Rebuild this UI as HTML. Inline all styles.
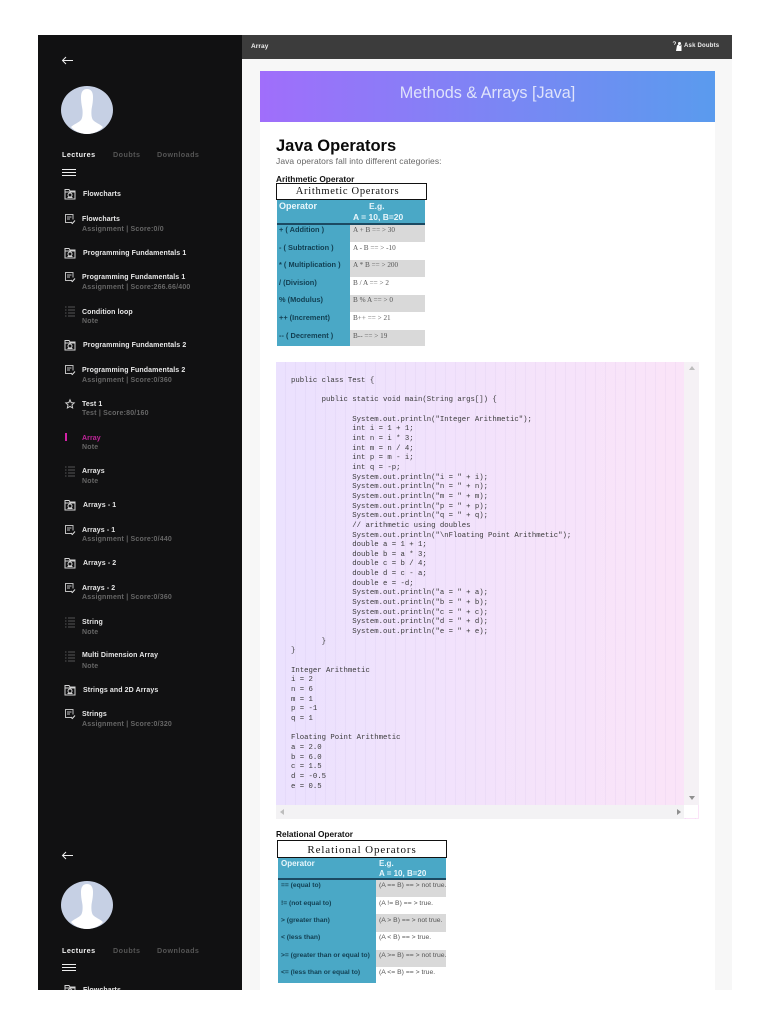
<!DOCTYPE html>
<html><head><meta charset="utf-8"><style>
html,body{margin:0;padding:0;background:#fff}
body{width:768px;height:1024px;position:relative;overflow:hidden;font-family:"Liberation Sans",sans-serif;filter:blur(.3px)}
.a{position:absolute;white-space:nowrap}
.side{left:38px;top:35px;width:204px;height:955px;background:#111112}
.t{font-size:7px;font-weight:700;color:#e8e8e8;letter-spacing:.1px;line-height:9px;margin-top:1px}
.s{font-size:7px;font-weight:700;color:#666;letter-spacing:.2px;line-height:9px;margin-top:1px}
.tab{font-size:7.2px;font-weight:700;letter-spacing:.45px;line-height:9px;margin-top:1px}
.ic{position:absolute;width:12px;height:12px;overflow:visible}
pre{position:absolute;margin:0;font-family:"Liberation Mono",monospace;font-size:7.3px;line-height:9.65px;color:#3a3a3a}
.b{position:absolute;font-weight:700;white-space:nowrap;color:#123f52;font-size:7.4px;line-height:9px}
.v{position:absolute;white-space:nowrap;color:#555;font-size:7.2px;line-height:9px;font-family:"Liberation Serif",serif;margin-top:1px}
.w{font-family:"Liberation Sans",sans-serif;font-size:6.800px;margin-top:0}
.r{font-size:6.700px}
.g{position:absolute;background:#d9d9d9}
</style></head><body>
<svg width="0" height="0" style="position:absolute"><defs>
<symbol id="fold" viewBox="0 0 12 12"><path d="M1 1.500h4l1 1.500h5v8H1zM1 4h10" fill="none" stroke="#d5d5d5" stroke-width="1"/><circle cx="6" cy="7" r="2" fill="none" stroke="#d5d5d5" stroke-width="1"/><path d="M3.500 9.500h5" stroke="#d5d5d5"/></symbol>
<symbol id="asg" viewBox="0 0 12 12"><path d="M7 9.500H1.500v-8h7.500v5M3 4h4.500M3 6h3" fill="none" stroke="#bdbdbd" stroke-width="1"/><path d="M6.800 9l1.500 1.500 2.700-3" fill="none" stroke="#e0e0e0" stroke-width="1"/></symbol>
<symbol id="lst" viewBox="0 0 12 12"><path d="M1 2h1.500M1 5h1.500M1 8h1.500M1 11h1.500M4 2h7M4 5h7M4 8h7M4 11h7" stroke="#555" stroke-width="1" fill="none"/></symbol>
<symbol id="star" viewBox="0 0 12 12"><path d="M6 1.800l1.200 2.800 3 .3-2.200 2 .6 3L6 8.400l-2.600 1.500.6-3-2.200-2 3-.3z" fill="none" stroke="#d0d0d0" stroke-width="1"/></symbol>
<symbol id="av" viewBox="0 0 52 48"><ellipse cx="26" cy="24" rx="26" ry="24" fill="#c6d0e4"/><path d="M26 3c4 0 6 3 6 8 0 6-1 9-1.500 13-.3 4 0 8 1.500 10 2 2.500 7 4 10 7-4 4.500-10 7-16 7s-12-2.500-16-7c3-3 8-4.500 10-7 1.500-2 1.800-6 1.500-10-.5-4-1.500-7-1.500-13 0-5 2-8 6-8z" fill="#fff"/></symbol>
</defs></svg>

<div class="a side"></div>

<svg class="a" style="left:61px;top:55px" width="13" height="11" viewBox="0 0 13 11"><path d="M12 5.500H1.500M5 2L1.500 5.500 5 9" fill="none" stroke="#eee" stroke-width="1"/></svg>
<svg class="a" style="left:61px;top:86px" width="52" height="48" viewBox="0 0 52 48"><use href="#av"/></svg>
<div class="a tab" style="left:62px;top:149px;color:#f0f0f0">Lectures</div>
<div class="a tab" style="left:113px;top:149px;color:#555">Doubts</div>
<div class="a tab" style="left:157px;top:149px;color:#555">Downloads</div>
<div class="a" style="left:62px;top:169px;width:14px;height:1px;background:#eee"></div>
<div class="a" style="left:62px;top:172px;width:14px;height:1px;background:#eee"></div>
<div class="a" style="left:62px;top:175px;width:14px;height:1px;background:#eee"></div>

<svg class="ic" style="left:64px;top:188px"><use href="#fold"/></svg><div class="a t" style="left:83px;top:189px">Flowcharts</div>
<svg class="ic" style="left:64px;top:213px"><use href="#asg"/></svg><div class="a t" style="left:82px;top:214px">Flowcharts</div><div class="a s" style="left:82px;top:224px">Assignment | Score:0/0</div>
<svg class="ic" style="left:64px;top:247px"><use href="#fold"/></svg><div class="a t" style="left:83px;top:248px">Programming Fundamentals 1</div>
<svg class="ic" style="left:64px;top:271px"><use href="#asg"/></svg><div class="a t" style="left:82px;top:272px">Programming Fundamentals 1</div><div class="a s" style="left:82px;top:282px">Assignment | Score:266.66/400</div>
<svg class="ic" style="left:64px;top:305px"><use href="#lst"/></svg><div class="a t" style="left:82px;top:307px">Condition loop</div><div class="a s" style="left:82px;top:316px">Note</div>
<svg class="ic" style="left:64px;top:339px"><use href="#fold"/></svg><div class="a t" style="left:83px;top:340px">Programming Fundamentals 2</div>
<svg class="ic" style="left:64px;top:364px"><use href="#asg"/></svg><div class="a t" style="left:82px;top:365px">Programming Fundamentals 2</div><div class="a s" style="left:82px;top:375px">Assignment | Score:0/360</div>
<svg class="ic" style="left:64px;top:398px"><use href="#star"/></svg><div class="a t" style="left:82px;top:399px">Test 1</div><div class="a s" style="left:82px;top:408px">Test | Score:80/160</div>
<div class="a" style="left:65px;top:433px;width:2px;height:8px;background:#d321a6"></div><div class="a t" style="left:82px;top:433px;color:#c0259a">Array</div><div class="a s" style="left:82px;top:442px">Note</div>
<svg class="ic" style="left:64px;top:465px"><use href="#lst"/></svg><div class="a t" style="left:82px;top:466px">Arrays</div><div class="a s" style="left:82px;top:476px">Note</div>
<svg class="ic" style="left:64px;top:499px"><use href="#fold"/></svg><div class="a t" style="left:83px;top:500px">Arrays - 1</div>
<svg class="ic" style="left:64px;top:524px"><use href="#asg"/></svg><div class="a t" style="left:82px;top:525px">Arrays - 1</div><div class="a s" style="left:82px;top:534px">Assignment | Score:0/440</div>
<svg class="ic" style="left:64px;top:557px"><use href="#fold"/></svg><div class="a t" style="left:83px;top:558px">Arrays - 2</div>
<svg class="ic" style="left:64px;top:582px"><use href="#asg"/></svg><div class="a t" style="left:82px;top:583px">Arrays - 2</div><div class="a s" style="left:82px;top:592px">Assignment | Score:0/360</div>
<svg class="ic" style="left:64px;top:616px"><use href="#lst"/></svg><div class="a t" style="left:82px;top:617px">String</div><div class="a s" style="left:82px;top:627px">Note</div>
<svg class="ic" style="left:64px;top:650px"><use href="#lst"/></svg><div class="a t" style="left:82px;top:650px">Multi Dimension Array</div><div class="a s" style="left:82px;top:661px">Note</div>
<svg class="ic" style="left:64px;top:684px"><use href="#fold"/></svg><div class="a t" style="left:83px;top:685px">Strings and 2D Arrays</div>
<svg class="ic" style="left:64px;top:708px"><use href="#asg"/></svg><div class="a t" style="left:82px;top:709px">Strings</div><div class="a s" style="left:82px;top:719px">Assignment | Score:0/320</div>

<svg class="a" style="left:61px;top:850px" width="13" height="11" viewBox="0 0 13 11"><path d="M12 5.500H1.500M5 2L1.500 5.500 5 9" fill="none" stroke="#eee" stroke-width="1"/></svg>
<svg class="a" style="left:61px;top:881px" width="52" height="48" viewBox="0 0 52 48"><use href="#av"/></svg>
<div class="a tab" style="left:62px;top:945px;color:#f0f0f0">Lectures</div>
<div class="a tab" style="left:113px;top:945px;color:#555">Doubts</div>
<div class="a tab" style="left:157px;top:945px;color:#555">Downloads</div>
<div class="a" style="left:62px;top:964px;width:14px;height:1px;background:#eee"></div>
<div class="a" style="left:62px;top:967px;width:14px;height:1px;background:#eee"></div>
<div class="a" style="left:62px;top:970px;width:14px;height:1px;background:#eee"></div>
<div class="a" style="left:38px;top:980px;width:204px;height:10px;overflow:hidden">
<svg class="ic" style="left:26px;top:4px"><use href="#fold"/></svg><div class="a t" style="left:45px;top:5px">Flowcharts</div></div>

<div class="a" style="left:242px;top:59px;width:490px;height:931px;background:#f7f7f7"></div>
<div class="a" style="left:242px;top:35px;width:490px;height:24px;background:#3c3c3c"></div>
<div class="a t" style="left:251px;top:41px;font-size:6.500px;color:#eee;letter-spacing:.1px">Array</div>
<svg class="a" style="left:672px;top:41px" width="11" height="11" viewBox="0 0 11 11"><path d="M5 4.500l1.500-1 1.500 1.500 1.500-1.500V10H4z" fill="#fff"/><circle cx="7.500" cy="2.500" r="1.500" fill="#fff"/><path d="M1 1.500c.5-1 2.500-1 2.500.3 0 1-1 1-1 2" fill="none" stroke="#fff" stroke-width=".8"/></svg>
<div class="a t" style="left:684px;top:41px;font-size:6px;color:#eee;letter-spacing:.2px">Ask Doubts</div>

<div class="a" style="left:260px;top:122px;width:455px;height:868px;background:#fff"></div>
<div class="a" style="left:260px;top:71px;width:455px;height:51px;background:linear-gradient(90deg,#a06efb,#5a9bee)"></div>
<div class="a" style="left:260px;top:83px;width:455px;text-align:center;color:#dfe3fb;font-size:16.200px;line-height:20px">Methods &amp; Arrays [Java]</div>

<div class="a" style="left:276px;top:136px;font-size:16.500px;font-weight:700;line-height:21px;color:#0a0a0a">Java Operators</div>
<div class="a" style="left:276px;top:156px;font-size:8.500px;line-height:11px;letter-spacing:.07px;color:#666">Java operators fall into different categories:</div>
<div class="a" style="left:276px;top:174px;font-size:8.300px;font-weight:700;line-height:10px;color:#111">Arithmetic Operator</div>

<div class="a" style="left:276px;top:183px;width:141px;padding-right:8px;height:15px;border:1.500px solid #111;background:#fff;text-align:center;font-family:'Liberation Serif',serif;font-size:10.500px;line-height:15px;letter-spacing:.7px;color:#111">Arithmetic Operators</div>
<div class="a" style="left:277px;top:200px;width:148px;height:146px;background:#4aa8c6"></div>
<div class="a" style="left:277px;top:223px;width:148px;height:1.500px;background:#1c4a62"></div>
<div class="a" style="left:350px;top:225px;width:75px;height:121px;background:#fff"></div>
<div class="g" style="left:350px;top:225px;width:75px;height:17px"></div>
<div class="g" style="left:350px;top:260px;width:75px;height:17px"></div>
<div class="g" style="left:350px;top:295px;width:75px;height:17px"></div>
<div class="g" style="left:350px;top:330px;width:75px;height:16px"></div>
<div class="b" style="left:279px;top:202px;color:#e8f6fb;font-size:9px">Operator</div>
<div class="b" style="left:369px;top:202px;color:#e8f6fb;font-size:8.500px">E.g.</div>
<div class="b" style="left:353px;top:213px;color:#e8f6fb;font-size:8.500px">A = 10, B=20</div>
<div class="b" style="left:279px;top:225px">+ ( Addition  )</div><div class="v" style="left:353px;top:225px">A + B  == &gt; 30</div>
<div class="b" style="left:279px;top:243px">- ( Subtraction )</div><div class="v" style="left:353px;top:243px">A - B  == &gt; -10</div>
<div class="b" style="left:279px;top:260px">* ( Multiplication )</div><div class="v" style="left:353px;top:260px">A * B == &gt; 200</div>
<div class="b" style="left:279px;top:278px">/ (Division)</div><div class="v" style="left:353px;top:278px">B / A == &gt; 2</div>
<div class="b" style="left:279px;top:295px">% (Modulus)</div><div class="v" style="left:353px;top:295px">B % A == &gt; 0</div>
<div class="b" style="left:279px;top:313px">++ (Increment)</div><div class="v" style="left:353px;top:313px">B++  == &gt; 21</div>
<div class="b" style="left:279px;top:331px">-- ( Decrement )</div><div class="v" style="left:353px;top:331px">B-- == &gt; 19</div>

<div class="a" style="left:276px;top:362px;width:423px;height:457px;background:repeating-linear-gradient(90deg,rgba(255,255,255,0) 0 9px,rgba(150,130,200,.07) 9px 10px),linear-gradient(90deg,#ebe1fe,#fbe4f8)"></div>
<div class="a" style="left:684px;top:362px;width:15px;height:443px;background:#f5f1f5"></div>
<div class="a" style="left:276px;top:805px;width:408px;height:14px;background:#f3f2f4"></div>
<div class="a" style="left:684px;top:805px;width:14px;height:13px;background:#fff"></div>
<div class="a" style="left:689px;top:366px;width:0;height:0;border:3px solid transparent;border-bottom:4px solid #bdbdbd;border-top:0"></div>
<div class="a" style="left:689px;top:796px;width:0;height:0;border:3px solid transparent;border-top:4px solid #8f8f8f;border-bottom:0"></div>
<div class="a" style="left:280px;top:809px;width:0;height:0;border:3px solid transparent;border-right:4px solid #bdbdbd;border-left:0"></div>
<div class="a" style="left:677px;top:809px;width:0;height:0;border:3px solid transparent;border-left:4px solid #8f8f8f;border-right:0"></div>
<pre style="left:291px;top:377px">public class Test {

       public static void main(String args[]) {

              System.out.println("Integer Arithmetic");
              int i = 1 + 1;
              int n = i * 3;
              int m = n / 4;
              int p = m - i;
              int q = -p;
              System.out.println("i = " + i);
              System.out.println("n = " + n);
              System.out.println("m = " + m);
              System.out.println("p = " + p);
              System.out.println("q = " + q);
              // arithmetic using doubles
              System.out.println("\nFloating Point Arithmetic");
              double a = 1 + 1;
              double b = a * 3;
              double c = b / 4;
              double d = c - a;
              double e = -d;
              System.out.println("a = " + a);
              System.out.println("b = " + b);
              System.out.println("c = " + c);
              System.out.println("d = " + d);
              System.out.println("e = " + e);
       }
}

Integer Arithmetic
i = 2
n = 6
m = 1
p = -1
q = 1

Floating Point Arithmetic
a = 2.0
b = 6.0
c = 1.5
d = -0.5
e = 0.5</pre>

<div class="a" style="left:276px;top:829px;font-size:8.300px;font-weight:700;line-height:10px;color:#111">Relational Operator</div>
<div class="a" style="left:277px;top:840px;width:168px;height:16px;border:1.500px solid #111;background:#fff;text-align:center;font-family:'Liberation Serif',serif;font-size:11px;line-height:18px;letter-spacing:.9px;color:#111">Relational Operators</div>
<div class="a" style="left:278px;top:858px;width:168px;height:125px;background:#4aa8c6"></div>
<div class="a" style="left:278px;top:878px;width:168px;height:1.500px;background:#1c4a62"></div>
<div class="a" style="left:376px;top:880px;width:70px;height:103px;background:#fff"></div>
<div class="g" style="left:376px;top:880px;width:70px;height:17px"></div>
<div class="g" style="left:376px;top:914px;width:70px;height:18px"></div>
<div class="g" style="left:376px;top:950px;width:70px;height:17px"></div>
<div class="b" style="left:281px;top:859px;color:#e8f6fb;font-size:8px">Operator</div>
<div class="b" style="left:379px;top:859px;color:#e8f6fb;font-size:8px">E.g.</div>
<div class="b" style="left:379px;top:869px;color:#e8f6fb;font-size:8px">A = 10, B=20</div>
<div class="b r" style="left:281px;top:881px">== (equal to)</div><div class="v w" style="left:379px;top:881px">(A == B) == &gt; not true.</div>
<div class="b r" style="left:281px;top:899px">!= (not equal to)</div><div class="v w" style="left:379px;top:899px">(A != B) == &gt; true.</div>
<div class="b r" style="left:281px;top:916px">&gt; (greater than)</div><div class="v w" style="left:379px;top:916px">(A &gt; B) == &gt; not true.</div>
<div class="b r" style="left:281px;top:933px">&lt; (less than)</div><div class="v w" style="left:379px;top:933px">(A &lt; B) == &gt; true.</div>
<div class="b r" style="left:281px;top:951px">&gt;= (greater than or equal to)</div><div class="v w" style="left:379px;top:951px">(A &gt;= B) == &gt; not true.</div>
<div class="b r" style="left:281px;top:968px">&lt;= (less than or equal to)</div><div class="v w" style="left:379px;top:968px">(A &lt;= B) == &gt; true.</div>
</body></html>
